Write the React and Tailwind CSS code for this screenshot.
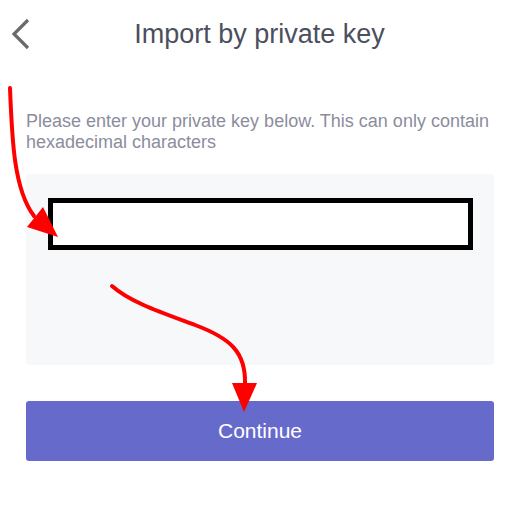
const Arrows = () => (
  <svg className="pointer-events-none absolute inset-0" width="515" height="523" viewBox="0 0 515 523">
    <path d="M10 88 C 12 140, 14 190, 34 216" fill="none" stroke="#ff0000" strokeWidth="4" strokeLinecap="round" />
    <polygon points="27,227 43,207 58,237" fill="#ff0000" />
    <path d="M112 286 C 130 302, 160 312, 195 325 C 230 338, 246 352, 245 384" fill="none" stroke="#ff0000" strokeWidth="4" strokeLinecap="round" />
    <polygon points="232,383 257,383 244,412" fill="#ff0000" />
  </svg>
);

export default function App() {
  return (
    <div className="relative h-[523px] w-[515px] bg-white font-['Liberation_Sans',Arial,sans-serif]">
      <header className="relative flex h-[68px] items-center justify-center">
        <button className="absolute left-[10px] top-[18px] text-[#6b6b6b]">
          <svg width="22" height="32" viewBox="0 0 22 32" fill="none" stroke="currentColor" strokeWidth="3.2">
            <path d="M18 2 L4 16 L18 30" />
          </svg>
        </button>
        <h1 className="pl-[4px] text-[27px] text-[#4b4f5e]">Import by private key</h1>
      </header>

      <div className="pl-[26px] pr-[21px] pt-[43px]">
        <p className="text-[18px] leading-[21px] text-[#8b8d9d]">
          Please enter your private key below. This can only contain hexadecimal characters
        </p>

        <div className="mt-[21px] h-[191px] rounded-[3px] bg-[#f7f8fa] pl-[22px] pr-[21px] pt-[24px]">
          <input className="h-[52px] w-full border-[5px] border-black bg-white px-2 outline-none" />
        </div>

        <button className="mt-[36px] h-[60px] w-full rounded-[3px] bg-[#666bcb] text-[21px] text-white">
          Continue
        </button>
      </div>

      <Arrows />
    </div>
  );
}
